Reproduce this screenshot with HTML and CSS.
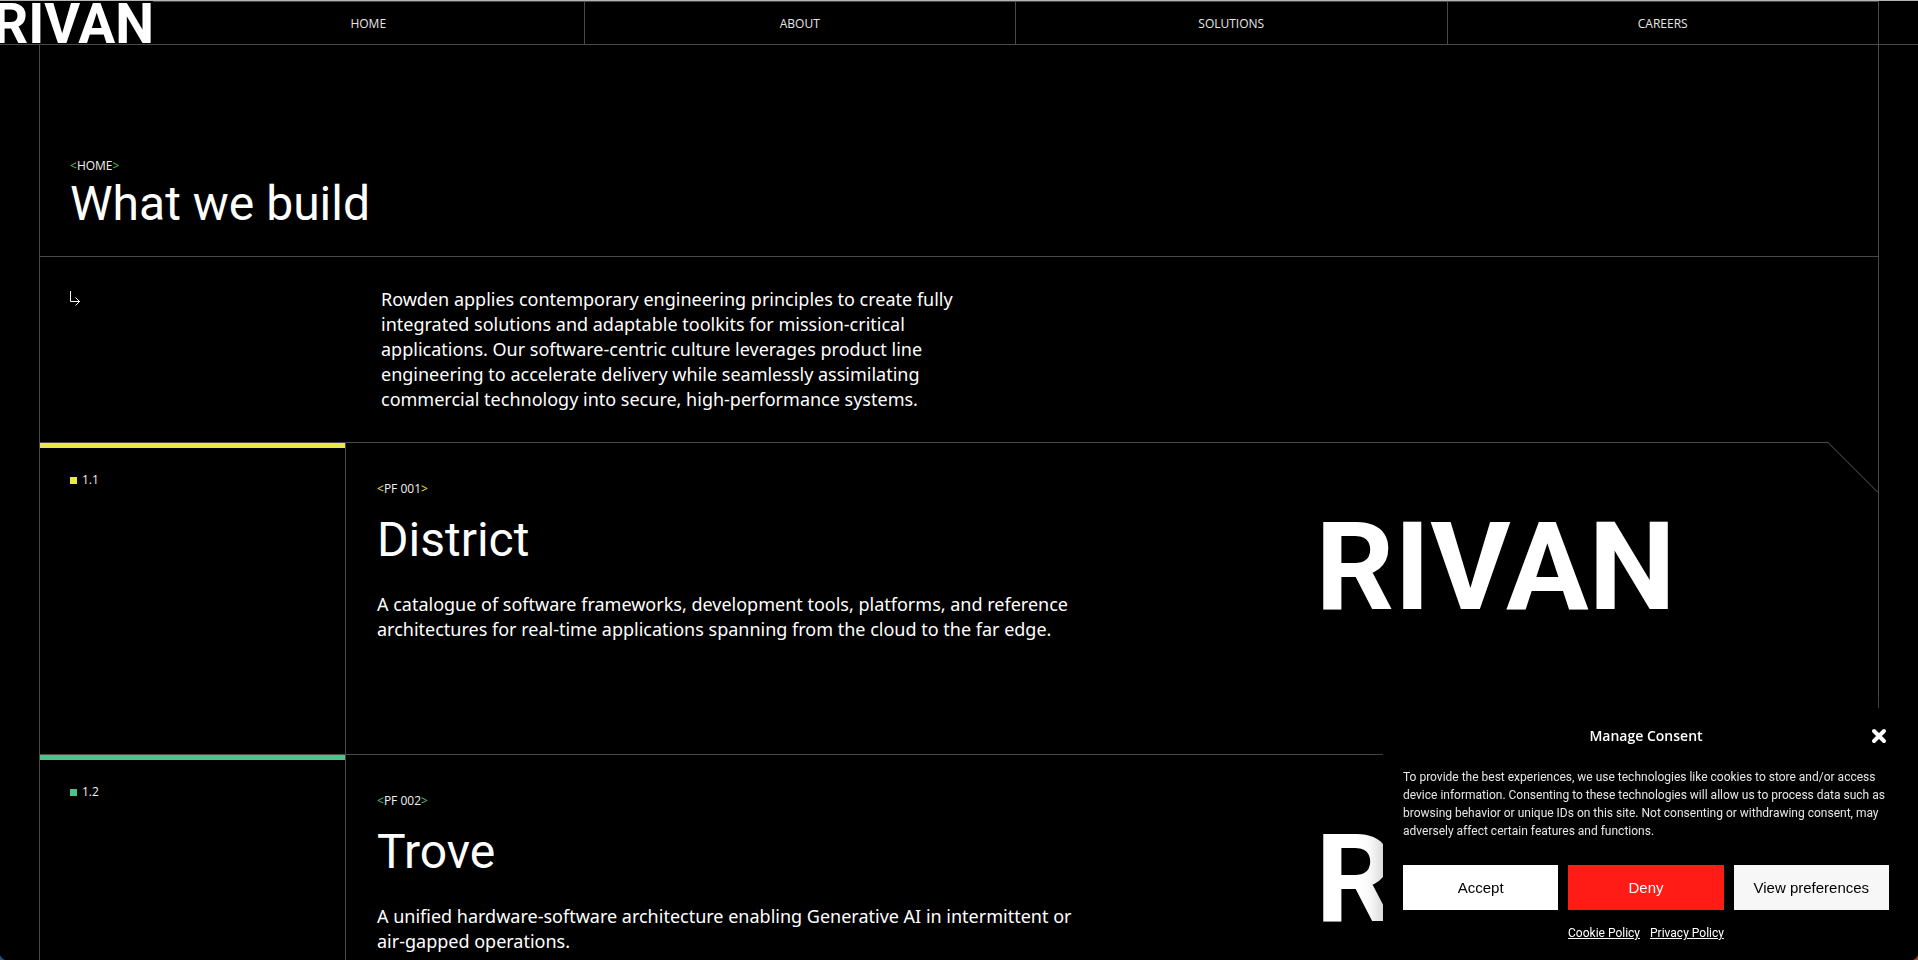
FILE: index.html
```html
<!DOCTYPE html>
<html lang="en">
<head>
  <meta charset="utf-8">
  <meta name="viewport" content="width=device-width, initial-scale=1">
  <title>What we build</title>
  <link rel="stylesheet" href="styles.css">
</head>
<body>
  <header class="site-header">
    <a class="logo" href="#">RIVAN</a>
    <nav class="site-nav">
      <a href="#">HOME</a>
      <a href="#">ABOUT</a>
      <a href="#">SOLUTIONS</a>
      <a href="#">CAREERS</a>
    </nav>
  </header>

  <main class="frame">
    <section class="hero">
      <p class="tag tag-leaf"><a href="#">HOME</a></p>
      <h1>What we build</h1>
    </section>

    <section class="intro">
      <svg class="intro-arrow" width="12" height="16" viewBox="0 0 12 16" fill="none" stroke="#fff" aria-hidden="true">
        <path d="M.5 0V10.5H9.5M5.5 6.5L9.5 10.5L5.5 14.5"/>
      </svg>
      <p>Rowden applies contemporary engineering principles to create fully integrated solutions and adaptable toolkits for mission-critical applications. Our software-centric culture leverages product line engineering to accelerate delivery while seamlessly assimilating commercial technology into secure, high-performance systems.</p>
    </section>

    <section class="product product-yellow">
      <div class="product-index"><span class="marker"></span>1.1</div>
      <div class="product-text">
        <p class="tag">PF 001</p>
        <h2>District</h2>
        <p class="summary">A catalogue of software frameworks, development tools, platforms, and reference architectures for real-time applications spanning from the cloud to the far edge.</p>
      </div>
      <div class="product-mark">RIVAN</div>
      <svg class="notch" width="50" height="51" viewBox="0 0 50 51" aria-hidden="true">
        <path d="M0 0H50V51Z" fill="#000"/>
        <path d="M0 .5L50 50.5" fill="none" stroke="#5a5a5a"/>
      </svg>
    </section>

    <section class="product product-green">
      <div class="product-index"><span class="marker"></span>1.2</div>
      <div class="product-text">
        <p class="tag">PF 002</p>
        <h2>Trove</h2>
        <p class="summary">A unified hardware-software architecture enabling Generative AI in intermittent or air-gapped operations.</p>
      </div>
      <div class="product-mark">RIVAN</div>
    </section>
  </main>

  <section class="consent" role="dialog" aria-labelledby="consent-title">
    <div class="consent-head">
      <h2 id="consent-title">Manage Consent</h2>
      <button class="consent-close" type="button" aria-label="Close">
        <svg width="16" height="16" viewBox="0 0 16 16" fill="none" stroke="#fff" stroke-width="4" stroke-linecap="round" aria-hidden="true">
          <path d="M3 3L13 13M13 3L3 13"/>
        </svg>
      </button>
    </div>
    <p class="consent-text">To provide the best experiences, we use technologies like cookies to store and/or access device information. Consenting to these technologies will allow us to process data such as browsing behavior or unique IDs on this site. Not consenting or withdrawing consent, may adversely affect certain features and functions.</p>
    <div class="consent-actions">
      <button class="accept" type="button">Accept</button>
      <button class="deny" type="button">Deny</button>
      <button class="prefs" type="button">View preferences</button>
    </div>
    <div class="consent-links">
      <a href="#">Cookie Policy</a>
      <a href="#">Privacy Policy</a>
    </div>
  </section>

  <span class="corner corner-left"></span>
  <span class="corner corner-right"></span>
</body>
</html>
```
FILE: styles.css
```css
:root {
  --line: #4a4a4a;
  --gutter: 39px;
  --display: Roboto, "Noto Sans", sans-serif;
  --label: "Open Sans", "Noto Sans", sans-serif;
  --body: "Noto Sans", "Open Sans", sans-serif;
}

* {
  box-sizing: border-box;
}

body {
  margin: 0;
  height: 100vh;
  overflow: hidden;
  background: #000;
  color: #fff;
  font: 400 18px/25px var(--body);
}

h1,
h2,
p {
  margin: 0;
}

a {
  color: inherit;
  text-decoration: none;
}

/* Header */

.site-header {
  display: flex;
  height: 45px;
  padding-right: var(--gutter);
  border-top: 1px solid #b4b4b4;
  border-bottom: 1px solid var(--line);
}

.logo {
  flex: 0 0 160px;
  min-width: 0;
  margin-left: -7px;
  white-space: nowrap;
  font: 700 55px/46px Roboto, sans-serif;
}

.site-nav {
  flex: 1;
  display: grid;
  grid-template-columns: repeat(4, 1fr);
  border-top: 1px solid var(--line);
}

.site-nav a {
  display: flex;
  align-items: center;
  justify-content: center;
  padding-top: 2px;
  border-right: 1px solid var(--line);
  color: #e6e6e6;
  font: 400 12px/16px var(--label);
}

/* Page frame */

.frame {
  margin: 0 var(--gutter);
  border-left: 1px solid var(--line);
  border-right: 1px solid var(--line);
}

.hero {
  padding: 113px 30px 22px;
  border-bottom: 1px solid var(--line);
}

h1,
.product h2 {
  font: 400 48px/60px var(--display);
}

.tag {
  color: #f0f0f0;
  font: 400 12px/16px var(--label);
}

.tag::before,
.tag::after {
  color: var(--accent);
}

.tag::before {
  content: "<";
}

.tag::after {
  content: ">";
}

.tag-leaf {
  --accent: #4fc04f;
}

.intro {
  display: flex;
  padding: 30px;
}

.intro-arrow {
  flex: none;
  margin: 4px 299px 0 0;
}

.intro p {
  max-width: 580px;
}

/* Product rows */

.product {
  position: relative;
  display: grid;
  grid-template-columns: 305px 768px 1fr;
  min-height: 312px;
  border-top: 1px solid var(--line);
}

.product-yellow {
  --accent: #ebe946;
}

.product-green {
  --accent: #4cc38a;
}

.product-index {
  display: flex;
  align-items: flex-start;
  gap: 5px;
  padding: 24px 30px;
  border-top: 5px solid var(--accent);
  color: #f0f0f0;
  font: 400 12px/16px var(--label);
}

.marker {
  width: 7px;
  height: 7px;
  margin-top: 5px;
  background: var(--accent);
}

.product-text {
  padding: 38px 0 0 31px;
  border-left: 1px solid var(--line);
}

.product h2 {
  margin: 13px 0 22px;
}

.summary {
  max-width: 715px;
}

.product-mark {
  justify-self: center;
  padding-top: 68px;
  font: 700 123px/112px Roboto, sans-serif;
}

.notch {
  position: absolute;
  top: -1px;
  right: 0;
}

/* Cookie consent */

.consent {
  position: fixed;
  right: 0;
  bottom: 0;
  width: 535px;
  padding: 18px 29px 18px 20px;
  background: #000;
  box-shadow: 0 0 20px rgba(0, 0, 0, 0.3);
}

.consent-head {
  display: grid;
  grid-template-columns: 1fr auto 1fr;
  align-items: center;
}

.consent-head h2 {
  grid-column: 2;
  font: 600 14px/20px var(--label);
}

.consent-close {
  display: flex;
  justify-self: end;
  margin-right: 2px;
  padding: 0;
  border: 0;
  background: none;
}

.consent-text {
  margin: 22px 0 25px;
  color: #e6e6e6;
  font: 400 12px/18px var(--display);
}

.consent-actions {
  display: grid;
  grid-template-columns: repeat(3, 1fr);
  gap: 10px;
}

.consent-actions button {
  height: 45px;
  padding: 0;
  border: 0;
  color: #000;
  font: 400 15px/20px "Liberation Sans", sans-serif;
}

.consent-actions .accept {
  background: #fff;
}

.consent-actions .deny {
  background: #ff1c17;
  color: #fff;
}

.consent-actions .prefs {
  background: #f7f7f7;
}

.consent-links {
  display: flex;
  justify-content: center;
  gap: 10px;
  margin-top: 14px;
  font: 400 12px/18px var(--display);
}

.consent-links a {
  text-decoration: underline;
}

/* Rounded window corners */

.corner {
  position: fixed;
  bottom: 0;
  width: 8px;
  height: 8px;
}

.corner-left {
  left: 0;
  background: radial-gradient(circle at 100% 0, transparent 8px, #1f5685 9px);
}

.corner-right {
  right: 0;
  background: radial-gradient(circle at 0 0, transparent 8px, #96492f 9px);
}
```
